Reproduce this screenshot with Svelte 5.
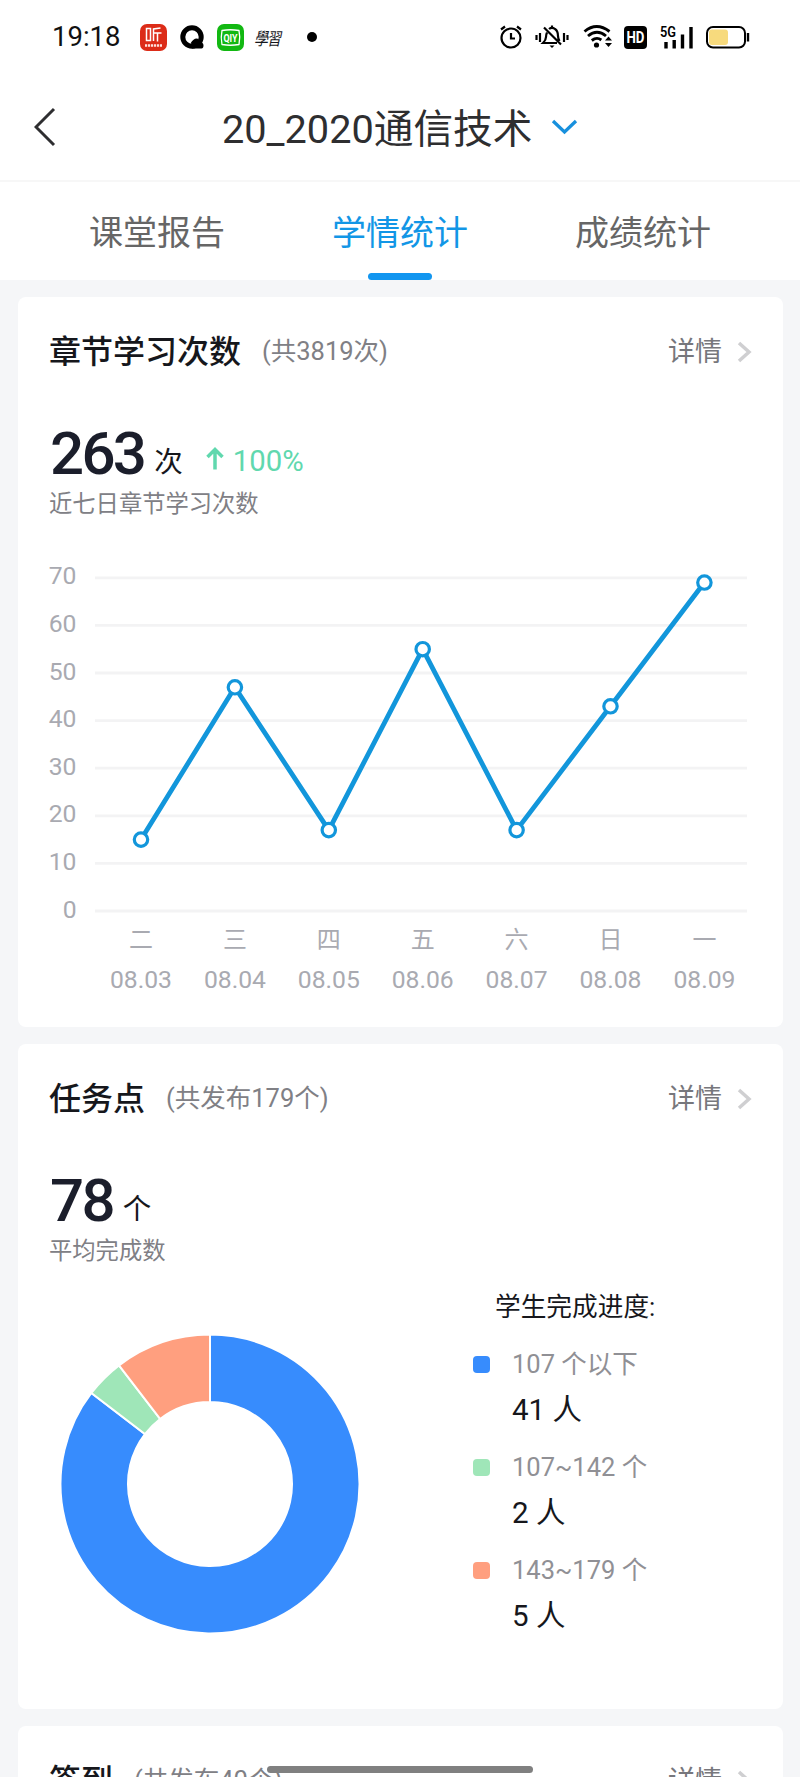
<script>
  const tabs = ['课堂报告', '学情统计', '成绩统计'];
  const active = 1;

  const days = [
    { day: '二', date: '08.03', value: 15 },
    { day: '三', date: '08.04', value: 47 },
    { day: '四', date: '08.05', value: 17 },
    { day: '五', date: '08.06', value: 55 },
    { day: '六', date: '08.07', value: 17 },
    { day: '日', date: '08.08', value: 43 },
    { day: '一', date: '08.09', value: 69 }
  ];
  const ticks = [70, 60, 50, 40, 30, 20, 10, 0];
  const px = (i) => 123 + i * 93.9;
  const py = (v) => 371 - v * 4.76;
  const line = days.map((d, i) => `${px(i)},${py(d.value)}`).join(' ');

  const groups = [
    { label: '107 个以下', count: 41, color: '#378cfd' },
    { label: '107~142 个', count: 2, color: '#9fe6b8' },
    { label: '143~179 个', count: 5, color: '#ff9f7f' }
  ];
  const total = groups.reduce((s, g) => s + g.count, 0);
  const R = 149.5;
  const r = 82;
  function point(radius, turn) {
    const a = turn * Math.PI * 2;
    return `${150 + radius * Math.sin(a)} ${150 - radius * Math.cos(a)}`;
  }
  let sum = 0;
  const slices = groups.map((g) => {
    const from = sum / total;
    sum += g.count;
    const to = sum / total;
    const large = to - from > 0.5 ? 1 : 0;
    return {
      color: g.color,
      d: `M${point(R, from)}A${R} ${R} 0 ${large} 1 ${point(R, to)}L${point(r, to)}A${r} ${r} 0 ${large} 0 ${point(r, from)}Z`
    };
  });
</script>

{#snippet cardHead(title, note)}
  <div class="card-head">
    <h2>{title}</h2>
    <span class="note">{note}</span>
    <span class="more">详情</span>
    <svg class="more-arrow" width="15" height="22" viewBox="0 0 15 22"><path d="M2 2l10 9-10 9" fill="none" stroke="#cfcfd1" stroke-width="3.500" /></svg>
  </div>
{/snippet}

<div class="screen">
  <div class="status">
    <span class="time">19:18</span>
    <div class="apps">
      <svg width="27" height="27" viewBox="0 0 27 27">
        <rect width="27" height="27" rx="7" fill="#dc2c18" />
        <path d="M6.500 4.500h4v12h-4zM13.500 17V5l7-1M13.500 9h8M17.500 9v8.500" fill="none" stroke="#fff" stroke-width="1.500" />
        <path d="M5 21.500h17" stroke="#ffe3df" stroke-width="2.600" stroke-dasharray="2.200 .8" />
      </svg>
      <svg class="q" width="24" height="24" viewBox="0 0 24 24">
        <circle cx="12" cy="12" r="9.200" fill="none" stroke="#000" stroke-width="5" />
        <path d="M11 17.500c1.500-2 3.500-4 5.500-4s3 1.500 3.500 3c2 .6 3.500 2 3.500 4 0 1.700-.7 3-2 3H12z" fill="#000" />
      </svg>
      <svg class="qiy" width="27" height="27" viewBox="0 0 27 27">
        <rect width="27" height="27" rx="7" fill="#12b812" />
        <path d="M5 6.500q8.500-1.500 17 0 1.500 6.500 0 14-8.500 1.500-17 0-1.500-7 0-14z" fill="none" stroke="#fff" stroke-width="1.300" />
        <text x="13.500" y="17.500" text-anchor="middle" textLength="14" lengthAdjust="spacingAndGlyphs" font-size="11" font-weight="700" fill="#fff">QIY</text>
      </svg>
      <span class="study">學習</span>
      <i class="dot"></i>
    </div>
    <div class="signals">
      <svg width="24" height="26" viewBox="0 0 24 26" fill="none" stroke="#000" stroke-width="2.200">
        <circle cx="12" cy="14" r="9.500" /><path d="M12 9v5.500h4M2 5.500l4-3M22 5.500l-4-3" />
      </svg>
      <svg class="bell" width="34" height="26" viewBox="0 0 34 26" fill="none" stroke="#000" stroke-width="2.200">
        <path d="M1.500 11v5M5 9v9M29 9v9M32.500 11v5M9 3.500l17 17M12 8.500q-1 2-1 4.500 0 3-3 6h14M14 5q3-2.500 6 0 3 2 3 7 0 2.500 1.500 5M17 1.500v3" />
        <path d="M14.500 21.500h5L17 24z" fill="#000" stroke="none" />
      </svg>
      <svg class="wifi" width="30" height="26" viewBox="0 0 30 26" fill="none" stroke="#000" stroke-width="2.900">
        <path d="M1.500 7.500q12-10 25 0M5 12q9-7.500 18 0M8.800 16.500q5-4 9.500-.5" />
        <circle cx="13.500" cy="21" r="2.600" fill="#000" stroke="none" />
        <path d="M22 16.500l3.500-4 3.500 4zM22 19l3.500 4 3.500-4z" fill="#000" stroke="none" />
      </svg>
      <svg class="hd" width="23" height="23" viewBox="0 0 23 23">
        <rect width="23" height="23" rx="4" fill="#000" />
        <text x="11.500" y="17" text-anchor="middle" textLength="18" lengthAdjust="spacingAndGlyphs" font-size="16" font-weight="700" fill="#fff">HD</text>
      </svg>
      <svg class="cell" width="33" height="25" viewBox="0 -1 33 25">
        <text x="0" y="11" textLength="16" lengthAdjust="spacingAndGlyphs" font-size="14.500" font-weight="600">5G</text>
        <path d="M6 16v6.500M14.200 14v8.500M22.500 8.500v14M31 1v21.500" stroke="#000" stroke-width="3.400" />
      </svg>
      <svg class="battery" width="44" height="23" viewBox="0 0 44 23">
        <rect x="1" y="1" width="38" height="20.500" rx="6" fill="none" stroke="#000" stroke-width="2" />
        <rect x="3" y="3.500" width="19" height="15.500" rx="3" fill="#f7da7d" />
        <path d="M42 7v8.500" stroke="#000" stroke-width="2.400" />
      </svg>
    </div>
  </div>

  <header>
    <svg class="back" width="22" height="40" viewBox="0 0 22 40"><path d="M20 2L2 20l18 18" fill="none" stroke="#2e2e30" stroke-width="3" /></svg>
    <h1>20_2020通信技术</h1>
    <svg class="down" width="27" height="17" viewBox="0 0 27 17"><path d="M2 2l11.500 11L25 2" fill="none" stroke="#1890dd" stroke-width="3.300" /></svg>
  </header>

  <nav>
    {#each tabs as tab, i}
      <div class="tab" class:active={i === active}>{tab}</div>
    {/each}
  </nav>

  <main>
    <section class="card visits">
      {@render cardHead('章节学习次数', '(共3819次)')}
      <div class="figure">
        <strong>263</strong><span class="unit">次</span>
        <svg class="up" width="18" height="27" viewBox="0 0 18 27"><path d="M9 22.500V3M1.500 10L9 2.500 16.500 10" fill="none" stroke="#60d8ae" stroke-width="3.500" /></svg>
        <span class="rate">100%</span>
      </div>
      <p class="caption">近七日章节学习次数</p>
      <svg class="chart" width="765" height="470" viewBox="0 0 765 470">
        {#each ticks as t}
          <path d="M77 {py(t)}H729" stroke="#f3f3f4" stroke-width="2.800" />
          <text x="58.500" y={py(t) + 6.500} text-anchor="end">{t}</text>
        {/each}
        {#each days as d, i}
          <text class="day" x={px(i)} y="408" text-anchor="middle">{d.day}</text>
          <text x={px(i)} y="447.500" text-anchor="middle">{d.date}</text>
        {/each}
        <polyline points={line} fill="none" stroke="#1296db" stroke-width="4.800" stroke-linejoin="round" />
        {#each days as d, i}
          <circle cx={px(i)} cy={py(d.value)} r="6.700" fill="#fff" stroke="#1296db" stroke-width="3.200" />
        {/each}
      </svg>
    </section>

    <section class="card tasks">
      {@render cardHead('任务点', '(共发布179个)')}
      <div class="figure"><strong>78</strong><span class="unit">个</span></div>
      <p class="caption">平均完成数</p>
      <div class="progress">
        <svg class="donut" width="300" height="300" viewBox="0 0 300 300">
          {#each slices as s}
            <path d={s.d} fill={s.color} stroke="#fff" stroke-width="2" />
          {/each}
        </svg>
        <div class="legend">
          <h3>学生完成进度:</h3>
          {#each groups as g}
            <div class="group">
              <i style="background: {g.color}"></i>
              <div>
                <div class="range">{g.label}</div>
                <div class="count">{g.count} 人</div>
              </div>
            </div>
          {/each}
        </div>
      </div>
    </section>

    <section class="card signin">
      {@render cardHead('签到', '(共发布40个)')}
    </section>
  </main>
  <div class="home"></div>
</div>

<style>
  :global(body) {
    margin: 0;
    overflow: hidden;
  }
  .screen {
    position: relative;
    width: 800px;
    height: 1777px;
    overflow: hidden;
    background: #f5f6f8;
    font-family: Roboto, 'Noto Sans CJK SC', sans-serif;
    color: #16171c;
  }
  svg {
    display: block;
    flex: none;
  }
  h1, h2, h3, p {
    margin: 0;
    font-weight: 400;
  }
  .status {
    display: flex;
    align-items: center;
    height: 74px;
    padding: 0 50px 0 52px;
    box-sizing: border-box;
    background: #fff;
  }
  .time {
    width: 88px;
    font-size: 27.500px;
    line-height: 74px;
    color: #111;
  }
  .apps, .signals {
    display: flex;
    align-items: center;
  }
  .q {
    margin-left: 13px;
  }
  .qiy {
    margin-left: 13px;
  }
  .study {
    width: 30px;
    margin-left: 10px;
    font-family: 'Noto Sans CJK TC', sans-serif;
    font-size: 14px;
    line-height: 20px;
    font-style: italic;
    letter-spacing: -1px;
    transform: scaleY(1.250);
  }
  .dot {
    width: 10px;
    height: 10px;
    margin-left: 23px;
    border-radius: 50%;
    background: #000;
  }
  .signals {
    margin-left: auto;
  }
  .bell {
    margin-left: 12px;
  }
  .wifi {
    margin-left: 14px;
  }
  .hd {
    margin-left: 11px;
  }
  .cell {
    margin-left: 13px;
  }
  .battery {
    margin-left: 13px;
  }
  header {
    display: flex;
    align-items: center;
    height: 106px;
    padding-left: 34px;
    background: #fff;
    border-bottom: 2px solid #f7f7f7;
  }
  h1 {
    width: 312px;
    margin-left: 166px;
    padding-top: 6px;
    font-size: 39.700px;
    line-height: 60px;
    white-space: nowrap;
    color: #2e2e30;
  }
  .down {
    margin-left: 17px;
  }
  nav {
    display: flex;
    height: 98px;
    padding: 0 35.500px;
    background: #fff;
  }
  .tab {
    display: flex;
    flex: 1;
    flex-direction: column;
    align-items: center;
    padding-top: 26px;
    font-size: 34px;
    line-height: 50px;
    color: #666;
  }
  .active {
    color: #1296e6;
  }
  .active::after {
    content: '';
    width: 64px;
    height: 7px;
    margin-top: 15px;
    border-radius: 4px;
    background: #1296f0;
  }
  main {
    display: flex;
    flex-direction: column;
    gap: 17px;
    padding: 17px 17px 0 18px;
  }
  .card {
    flex: none;
    box-sizing: border-box;
    border-radius: 8px;
    background: #fff;
  }
  .visits {
    height: 730px;
  }
  .tasks {
    height: 665px;
  }
  .signin {
    height: 120px;
  }
  .card-head {
    display: flex;
    align-items: center;
    height: 109px;
    padding: 0 31px;
  }
  h2 {
    font-size: 32px;
    font-weight: 500;
    line-height: 46px;
  }
  .note {
    margin-left: 21px;
    padding-bottom: 6px;
    font-size: 25.500px;
    color: #808085;
  }
  .more {
    margin-left: auto;
    padding-bottom: 4px;
    font-size: 27px;
    color: #77777c;
  }
  .more-arrow {
    margin-left: 15px;
  }
  .figure {
    display: flex;
    align-items: baseline;
    height: 81px;
    padding-left: 32px;
  }
  strong {
    font-size: 60px;
    font-weight: 500;
    line-height: 96px;
    letter-spacing: -2.700px;
    color: #1b1e2b;
  }
  .unit {
    position: relative;
    top: -2px;
    margin-left: 10px;
    font-size: 28.500px;
    line-height: 40px;
  }
  .up {
    margin-left: 23px;
  }
  .rate {
    position: relative;
    top: -3px;
    margin-left: 9px;
    font-size: 29.300px;
    color: #60d8ae;
  }
  .caption {
    padding-left: 31px;
    font-size: 23.300px;
    line-height: 34px;
    color: #808085;
  }
  .chart {
    margin-top: 19px;
  }
  .chart text {
    font-size: 24.700px;
    fill: #a9aab1;
  }
  .chart .day {
    font-size: 24px;
  }
  .progress {
    display: flex;
    padding-left: 42px;
  }
  .donut {
    margin-top: 66px;
  }
  .legend {
    margin-left: 113px;
    padding-top: 19px;
  }
  h3 {
    margin-left: 22px;
    font-size: 25.700px;
    line-height: 40px;
  }
  .group {
    display: flex;
    height: 103px;
  }
  .group i {
    width: 17px;
    height: 17px;
    margin-top: 29px;
    border-radius: 4px;
  }
  .group > div {
    margin-left: 22px;
  }
  .range {
    margin-top: 18px;
    font-size: 25.500px;
    line-height: 38px;
    color: #909095;
  }
  .count {
    margin-top: 6px;
    font-size: 29.500px;
    line-height: 42px;
  }
  .home {
    position: absolute;
    left: 267px;
    top: 1766px;
    width: 266px;
    height: 7px;
    border-radius: 4px;
    background: #808080;
  }
</style>
